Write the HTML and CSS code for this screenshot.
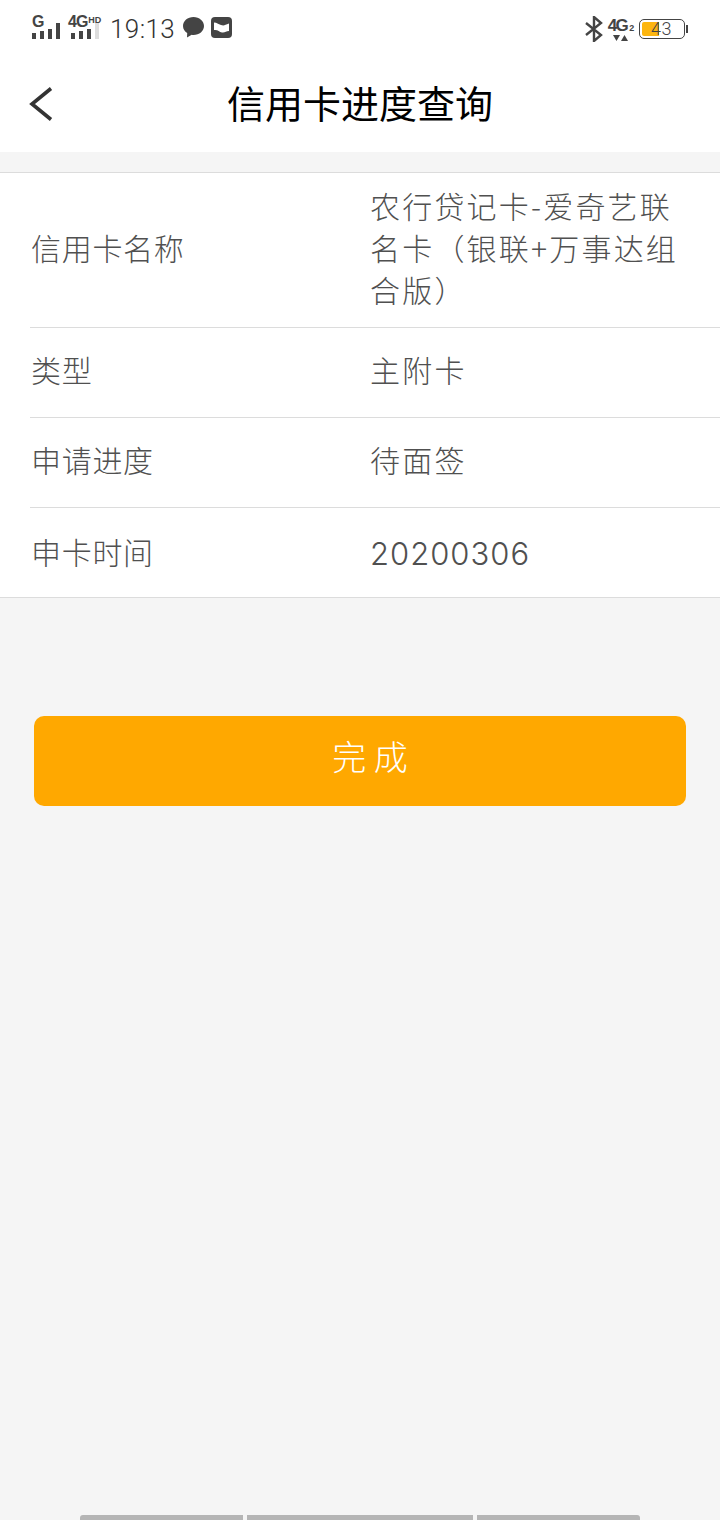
FILE: index.html
```html
<!DOCTYPE html>
<html>

<head>
    <meta charset="utf-8">
    <title>信用卡进度查询</title>
    <link rel="stylesheet" href="styles.css">
</head>

<body>
    <div id="page">
        <div class="status">
            <div class="sim">
                <span class="sim-label">G</span>
                <div class="bars">
                    <i class="b1"></i><i class="b2"></i><i class="b3"></i><i class="b4"></i>
                </div>
            </div>
            <div class="sim sim2">
                <span class="sim-label">4G<b>HD</b></span>
                <div class="bars">
                    <i class="b1"></i><i class="b2"></i><i class="b3"></i><i class="b4 off"></i>
                </div>
            </div>
            <span class="clock">19:13</span>
            <svg class="st-icon" width="23" height="23" viewBox="0 0 23 23">
                <path d="M11.500 1C5.700 1 1 4.900 1 10c0 3 1.700 5.600 4.200 7.100L5 21.500l4.700-2.700c.6.100 1.200.2 1.800.2 5.800 0 10.500-4 10.500-9S17.300 1 11.500 1z" fill="#444" />
            </svg>
            <svg class="st-icon" width="23" height="23" viewBox="0 0 23 23">
                <rect x="1" y="1" width="21" height="21" rx="4" fill="#444" />
                <path d="M4 6.500c3 0 4 1.500 7 2.500s4 0 8-1.500v7.500c-3 0-4 2-7 1.500s-4-3-8-2.500z" fill="#fff" />
            </svg>

            <div class="status-right">
                <svg width="20" height="26" viewBox="0 0 20 26">
                    <path d="M2 7l15 12-7 6V1l7 6L2 19" fill="none" stroke="#444" stroke-width="2.400" />
                </svg>
                <div class="net">
                    <span class="net-label">4G<b>2</b></span>
                    <svg width="16" height="8" viewBox="0 0 16 8">
                        <path d="M0 1h7L3.500 7z" fill="#444" />
                        <path d="M8 7h7l-3.500-6z" fill="#444" />
                    </svg>
                </div>
                <div class="battery">
                    <div class="cell">
                        <div class="level" style="width: 43%"></div>
                        <span class="pct">43</span>
                    </div>
                    <div class="nub"></div>
                </div>
            </div>
        </div>

        <div class="nav">
            <svg class="back" width="24" height="34" viewBox="0 0 24 34">
                <path d="M22 1.500L3 17l19 15.500" fill="none" stroke="#333" stroke-width="3.600" />
            </svg>
            <h1>信用卡进度查询</h1>
        </div>

        <div class="list">
            <div class="row row-tall">
                <div class="label">信用卡名称</div>
                <div class="value">农行贷记卡-爱奇艺联名卡（银联+万事达组合版）</div>
            </div>
            <div class="row">
                <div class="label">类型</div>
                <div class="value">主附卡</div>
            </div>
            <div class="row">
                <div class="label">申请进度</div>
                <div class="value">待面签</div>
            </div>
            <div class="row">
                <div class="label">申卡时间</div>
                <div class="value num">20200306</div>
            </div>
        </div>

        <div class="btn">完 成</div>

        <div class="home">
            <i></i><i></i><i></i>
        </div>
    </div>
</body>

</html>
```

FILE: styles.css
```css
* {
    margin: 0px;
    padding: 0px;
    box-sizing: border-box;
}

body {
    background: #f5f5f5;
    font-family: "Noto Sans CJK SC", "Noto Sans", sans-serif;
}

#page {
    display: flex;
    flex-direction: column;
    width: 720px;
    height: 1520px;
}

/* status bar */
.status {
    display: flex;
    align-items: center;
    height: 58px;
    padding: 0 32px;
    background: #fff;
    color: #444;
}

.sim {
    display: flex;
    flex-direction: column;
    width: 29px;
    height: 26px;
    margin-top: -6px;
}

.sim2 {
    width: 34px;
    margin-left: 7px;
}

.sim-label {
    display: block;
    height: 14px;
    font-family: "Liberation Sans", sans-serif;
    font-size: 16px;
    font-weight: bold;
    line-height: 18px;
    letter-spacing: -1px;
    white-space: nowrap;
}

.sim-label b {
    position: relative;
    top: -4px;
    margin-left: 1px;
    font-size: 9px;
    letter-spacing: 0;
}

.bars {
    display: flex;
    align-items: flex-end;
    gap: 4px;
    height: 16px;
    margin-top: -4px;
}

.sim2 .bars {
    margin-left: 3px;
}

.bars i {
    display: block;
    width: 4px;
}

.b1 { height: 6px; background: #444; }
.b2 { height: 8px; background: #444; }
.b3 { height: 10px; background: #444; }
.b4 { height: 16px; background: #444; }
.bars .off { background: #ddd; }

.clock {
    margin-left: 8px;
    font-family: Roboto, sans-serif;
    font-size: 26px;
    font-weight: 300;
    line-height: 34px;
    letter-spacing: .4px;
    color: #333;
}

.st-icon {
    margin-left: 7px;
    margin-top: -4px;
}

.st-icon + .st-icon {
    margin-left: 5px;
}

.status-right {
    display: flex;
    align-items: center;
    margin-left: auto;
}

.net {
    display: flex;
    flex-direction: column;
    align-items: center;
    width: 24px;
    margin-left: 5px;
}

.net-label {
    display: block;
    height: 17px;
    font-family: "Liberation Sans", sans-serif;
    font-size: 17px;
    font-weight: bold;
    line-height: 17px;
    letter-spacing: -1.500px;
    white-space: nowrap;
}

.net-label b {
    margin-left: 2px;
    font-size: 9px;
    letter-spacing: 0;
}

.battery {
    display: flex;
    align-items: center;
    margin-left: 6px;
}

.cell {
    position: relative;
    width: 46px;
    height: 20px;
    padding: 2px;
    border: 1px solid #444;
    border-radius: 5px;
}

.level {
    height: 100%;
    background: #fdb60f;
    border-radius: 2px 0 0 2px;
}

.pct {
    position: absolute;
    top: 0;
    left: 11px;
    font-family: Roboto, sans-serif;
    font-size: 18px;
    font-weight: 300;
    line-height: 18px;
    letter-spacing: .5px;
}

.nub {
    width: 2px;
    height: 8px;
    margin-left: 1px;
    background: #444;
}

/* title bar */
.nav {
    display: flex;
    align-items: center;
    justify-content: center;
    position: relative;
    height: 94px;
    background: #fff;
}

.nav h1 {
    font-size: 38px;
    font-weight: normal;
    line-height: 88px;
    height: 94px;
    color: #000;
}

.back {
    position: absolute;
    left: 29px;
    top: 29px;
}

/* info rows */
.list {
    margin-top: 20px;
    padding-left: 30px;
    background: #fff;
    border-top: 1px solid #dcdcdc;
    border-bottom: 1px solid #dcdcdc;
}

.row {
    display: flex;
    align-items: center;
    height: 90px;
    padding-bottom: 7px;
    border-bottom: 1px solid #dcdcdc;
    font-size: 30px;
    font-weight: 300;
    line-height: 42px;
    color: #505050;
}

.row:last-child {
    height: 89px;
    padding-bottom: 4px;
    border-bottom: 0;
}

.row-tall {
    height: 155px;
}

.label {
    width: 340px;
    padding-left: 1px;
    letter-spacing: .7px;
}

.value {
    width: 320px;
    letter-spacing: 2.200px;
}

.num {
    padding-top: 7px;
    font-family: Inter, sans-serif;
    font-size: 31px;
    letter-spacing: 1px;
}

.btn {
    width: 652px;
    height: 90px;
    margin: 118px 0 0 34px;
    padding-left: 20px;
    background: #ffa800;
    border-radius: 10px;
    color: #fff;
    font-size: 34px;
    font-weight: 300;
    line-height: 80px;
    text-align: center;
}

/* gesture bar at the very bottom */
.home {
    display: flex;
    gap: 4px;
    width: 560px;
    height: 5px;
    margin: auto 0 0 80px;
}

.home i {
    display: block;
    flex: 163;
    background: #b5b5b5;
}

.home i:nth-child(2) {
    flex: 226;
}

.home i:first-child {
    border-radius: 3px 0 0 0;
}

.home i:last-child {
    border-radius: 0 3px 0 0;
}
```
